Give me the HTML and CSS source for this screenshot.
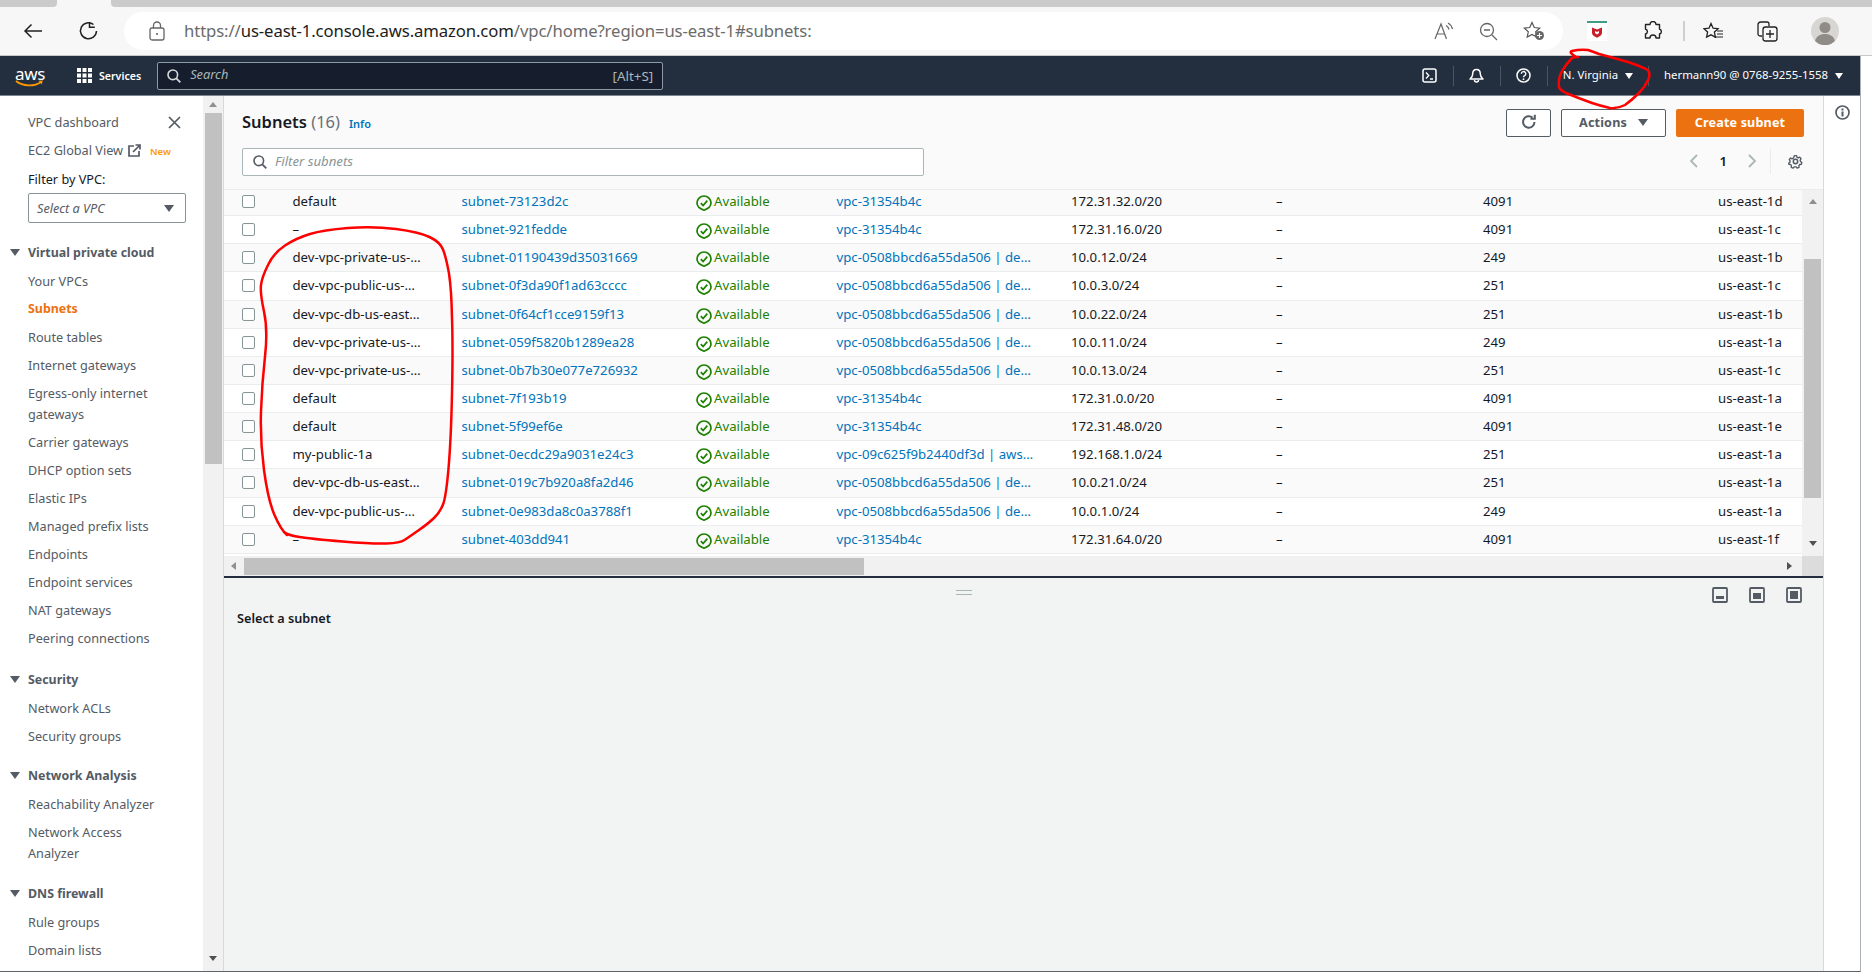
FILE: index.html
```html
<!DOCTYPE html>
<html lang="en">
<head>
<meta charset="utf-8">
<title>Subnets | VPC Console</title>
<link rel="stylesheet" href="styles.css">
</head>
<body>
<svg class="defs" width="0" height="0" aria-hidden="true">
  <symbol id="ok" viewBox="0 0 16 16"><path d="M8 1a7 7 0 0 1 7 7c0 3.4-2.6 5.6-7 7.2C3.600 13.600 1 11.400 1 8a7 7 0 0 1 7-7z" fill="none" stroke="#1d8102" stroke-width="1.700"/><path d="M4.800 8.200l2.300 2.400 4.200-5" fill="none" stroke="#1d8102" stroke-width="1.700"/></symbol>
</svg>

<div class="tabstrip"><span class="tab-left"></span><span class="tab-active"></span><span class="tab-right"></span></div>

<header class="toolbar">
  <svg class="tb-back" width="20" height="16" viewBox="0 0 20 16"><path d="M19 8H2M8.500 1.500L2 8l6.500 6.500" fill="none" stroke="#222" stroke-width="1.500"/></svg>
  <svg class="tb-reload" width="21" height="21" viewBox="0 0 21 21"><path d="M15.500 3.500A8 8 0 1 0 18.500 10" fill="none" stroke="#222" stroke-width="1.500"/><path d="M11.500 1v5.300h5.300" fill="none" stroke="#222" stroke-width="1.500"/></svg>
  <div class="address">
    <svg class="tb-lock" width="16" height="20" viewBox="0 0 16 20"><rect x="1" y="7" width="14" height="12" rx="2" fill="none" stroke="#666" stroke-width="1.300"/><path d="M4.500 7V4.500a3.500 3.500 0 0 1 7 0V7" fill="none" stroke="#666" stroke-width="1.300"/><circle cx="8" cy="13" r="1.100" fill="#666"/></svg>
    <span class="url"><span class="url-dim">https://</span>us-east-1.console.aws.amazon.com<span class="url-dim">/vpc/home?region=us-east-1#subnets:</span></span>
    <span class="spacer"></span>
    <svg class="tb-aloud" width="20" height="18" viewBox="0 0 20 18"><path d="M1 17L7 2l5.500 15M3 12h8" fill="none" stroke="#666" stroke-width="1.200"/><path d="M12 3.500a6 6 0 0 1 3 4M14 1a9 9 0 0 1 4.500 6" fill="none" stroke="#666" stroke-width="1.200"/></svg>
    <svg class="tb-zoom" width="19" height="19" viewBox="0 0 19 19"><circle cx="8" cy="8" r="6.500" fill="none" stroke="#666" stroke-width="1.300"/><path d="M5 8h6M13 13l5 5" fill="none" stroke="#666" stroke-width="1.300"/></svg>
    <svg class="tb-star" width="22" height="20" viewBox="0 0 22 20"><path d="M9 1.500l2.300 5 5.400.6-4 3.700 1.100 5.300L9 13.500l-4.800 2.600 1.100-5.300-4-3.700 5.400-.6z" fill="none" stroke="#555" stroke-width="1.200"/><circle cx="16.500" cy="14.500" r="4.500" fill="#666"/><path d="M16.500 12v5M14 14.500h5" stroke="#fff" stroke-width="1.100"/></svg>
  </div>
  <svg class="tb-mcafee" width="20" height="20" viewBox="0 0 20 20"><rect width="20" height="20" fill="#fff"/><rect width="20" height="2" fill="#3f9c85"/><path d="M5 6.500l5 2 5-2V12c0 2-2.500 3.500-5 4.800C7.500 15.500 5 14 5 12z" fill="#c8202a"/><path d="M8 10l2 1 2-1v2l-2 1.500L8 12z" fill="#fff"/></svg>
  <svg class="tb-ext" width="20" height="20" viewBox="0 0 20 20"><path d="M7 3.500a3 3 0 0 1 6 0h3.500V8a2.600 2.600 0 0 1 0 5v4H13a3 3 0 0 0-6 0H2.500v-4a2.600 2.600 0 0 0 0-5V3.500z" fill="none" stroke="#222" stroke-width="1.400" stroke-linejoin="round"/></svg>
  <span class="tb-sep"></span>
  <svg class="tb-favs" width="21" height="19" viewBox="0 0 21 19"><path d="M8 1.500l2.100 4.700 5 .5-3.700 3.400 1 5L8 12.800l-4.400 2.300 1-5L1 6.700l5-.5z" fill="none" stroke="#222" stroke-width="1.300"/><path d="M14 9h6M14 12h6M11 15h9" stroke="#222" stroke-width="1.200"/></svg>
  <svg class="tb-coll" width="21" height="21" viewBox="0 0 21 21"><path d="M5 15H3a2 2 0 0 1-2-2V4a3 3 0 0 1 3-3h6a2 2 0 0 1 2 2v2" fill="none" stroke="#222" stroke-width="1.300"/><rect x="6" y="6" width="14" height="14" rx="2.500" fill="none" stroke="#222" stroke-width="1.300"/><path d="M13 9v8M9 13h8" stroke="#222" stroke-width="1.300"/></svg>
  <svg class="tb-avatar" width="28" height="28" viewBox="0 0 28 28"><circle cx="14" cy="14" r="14" fill="#d8d6d3"/><circle cx="14" cy="10.500" r="5.500" fill="#8f8c88"/><path d="M4 24c1.500-5 5-7 10-7s8.500 2 10 7a14 14 0 0 1-20 0z" fill="#8f8c88"/></svg>
</header>

<div class="window">
  <nav class="awsnav">
    <span class="logo"><span class="logo-text">aws</span><svg class="logo-smile" width="29" height="8" viewBox="0 0 29 8"><path d="M1 1c7 5.500 18 6 25 1" fill="none" stroke="#f90" stroke-width="1.800"/><path d="M23.500 .8l4.300-.4-1.200 4z" fill="#f90"/></svg></span>
    <svg class="nav-grid" width="15" height="15" viewBox="0 0 15 15" fill="#fff"><rect width="4" height="4"/><rect x="5.500" width="4" height="4"/><rect x="11" width="4" height="4"/><rect y="5.500" width="4" height="4"/><rect x="5.500" y="5.500" width="4" height="4"/><rect x="11" y="5.500" width="4" height="4"/><rect y="11" width="4" height="4"/><rect x="5.500" y="11" width="4" height="4"/><rect x="11" y="11" width="4" height="4"/></svg>
    <span class="services">Services</span>
    <div class="navsearch">
      <svg width="14" height="14" viewBox="0 0 14 14"><circle cx="5.800" cy="5.800" r="4.800" fill="none" stroke="#d5dbdb" stroke-width="1.600"/><path d="M9.300 9.300l4 4" stroke="#d5dbdb" stroke-width="1.800"/></svg>
      <span class="navsearch-ph">Search</span>
      <span class="spacer"></span>
      <span class="navsearch-key">[Alt+S]</span>
    </div>
    <span class="spacer"></span>
    <span class="nav-cell nav-term"><svg width="15" height="15" viewBox="0 0 15 15"><rect x="1" y="1" width="13" height="13" rx="2" fill="none" stroke="#fff" stroke-width="1.500"/><path d="M4 4.500L6.800 7.500 4 10.500M8 11h3" fill="none" stroke="#fff" stroke-width="1.300"/></svg></span>
    <span class="nav-cell nav-bell"><svg width="15" height="15" viewBox="0 0 15 15"><path d="M7.500 1.500c-2.500 0-3.800 2-3.800 4.500 0 2.500-1 3.800-2.700 5h13c-1.700-1.200-2.700-2.500-2.700-5 0-2.500-1.300-4.500-3.800-4.500z" fill="none" stroke="#fff" stroke-width="1.500" stroke-linejoin="round"/><path d="M5.500 12a2 2 0 0 0 4 0" fill="none" stroke="#fff" stroke-width="1.500"/></svg></span>
    <span class="nav-cell nav-help"><svg width="15" height="15" viewBox="0 0 15 15"><circle cx="7.500" cy="7.500" r="6.500" fill="none" stroke="#fff" stroke-width="1.500"/><path d="M5.300 5.800a2.200 2.200 0 1 1 3.300 1.900c-.8.400-1.100.8-1.100 1.600" fill="none" stroke="#fff" stroke-width="1.400"/><circle cx="7.500" cy="11.200" r=".9" fill="#fff"/></svg></span>
    <span class="nav-cell nav-region"><span class="nav-text">N. Virginia</span><span class="caret-w"></span></span>
    <span class="nav-cell nav-user"><span class="nav-text">hermann90 @ 0768-9255-1558</span><span class="caret-w"></span></span>
  </nav>

  <div class="main">
    <aside class="side">
      <div class="side-inner">
        <div class="side-item side-top">VPC dashboard<svg class="side-close" width="13" height="13" viewBox="0 0 13 13"><path d="M1 1l11 11M12 1L1 12" stroke="#545b64" stroke-width="1.700"/></svg></div>
        <div class="side-item">EC2 Global View<svg class="side-ext" width="13" height="13" viewBox="0 0 13 13"><path d="M6 2H1v10h10V7" fill="none" stroke="#545b64" stroke-width="1.700"/><path d="M5 8l6.500-6.500M7.500 1H12v4.500" fill="none" stroke="#545b64" stroke-width="1.700"/></svg><span class="side-new">New</span></div>
        <div class="side-item side-filter">Filter by VPC:</div>
        <div class="side-select"><span>Select a VPC</span><span class="caret-g"></span></div>

        <div class="side-head side-head-first"><span class="caret-g"></span>Virtual private cloud</div>
        <div class="side-item">Your VPCs</div>
        <div class="side-item side-active">Subnets</div>
        <div class="side-item">Route tables</div>
        <div class="side-item">Internet gateways</div>
        <div class="side-item side-wrap">Egress-only internet gateways</div>
        <div class="side-item">Carrier gateways</div>
        <div class="side-item">DHCP option sets</div>
        <div class="side-item">Elastic IPs</div>
        <div class="side-item">Managed prefix lists</div>
        <div class="side-item">Endpoints</div>
        <div class="side-item">Endpoint services</div>
        <div class="side-item">NAT gateways</div>
        <div class="side-item">Peering connections</div>

        <div class="side-head"><span class="caret-g"></span>Security</div>
        <div class="side-item">Network ACLs</div>
        <div class="side-item">Security groups</div>

        <div class="side-head side-head-tight"><span class="caret-g"></span>Network Analysis</div>
        <div class="side-item">Reachability Analyzer</div>
        <div class="side-item side-wrap">Network Access Analyzer</div>

        <div class="side-head side-head-dns"><span class="caret-g"></span>DNS firewall</div>
        <div class="side-item">Rule groups</div>
        <div class="side-item">Domain lists</div>
      </div>
      <div class="side-scroll">
        <span class="arrow arrow-up"></span>
        <span class="side-thumb"></span>
        <span class="spacer"></span>
        <span class="arrow arrow-down"></span>
      </div>
    </aside>

    <section class="content">
      <div class="head">
        <div class="head-top">
          <h1 class="title">Subnets <span class="title-count">(16)</span></h1>
          <a class="info-link">Info</a>
          <span class="spacer"></span>
          <button class="btn btn-icon"><svg width="16" height="16" viewBox="0 0 16 16"><path d="M13.500 8a5.700 5.700 0 1 1-2-4.400" fill="none" stroke="#545b64" stroke-width="2"/><path d="M9.500 4.800h4.300V.8" fill="none" stroke="#545b64" stroke-width="2"/></svg></button>
          <button class="btn btn-actions">Actions<span class="caret-g"></span></button>
          <button class="btn btn-primary">Create subnet</button>
        </div>
        <div class="head-tools">
          <div class="filter">
            <svg width="14" height="14" viewBox="0 0 14 14"><circle cx="5.800" cy="5.800" r="4.800" fill="none" stroke="#545b64" stroke-width="1.600"/><path d="M9.300 9.300l4 4" stroke="#545b64" stroke-width="1.800"/></svg>
            <span class="filter-ph">Filter subnets</span>
          </div>
          <span class="spacer"></span>
          <div class="pager">
            <svg class="pg-prev" width="9" height="14" viewBox="0 0 9 14"><path d="M8 1L2 7l6 6" fill="none" stroke="#aab7b8" stroke-width="1.800"/></svg>
            <span class="pg-num">1</span>
            <svg class="pg-next" width="9" height="14" viewBox="0 0 9 14"><path d="M1 1l6 6-6 6" fill="none" stroke="#aab7b8" stroke-width="1.800"/></svg>
            <span class="pg-sep"></span>
            <svg class="pg-gear" width="15" height="15" viewBox="0 0 15 15"><circle cx="7.500" cy="7.500" r="2.200" fill="none" stroke="#545b64" stroke-width="1.500"/><path d="M6.300 1h2.400l.4 1.800 1.500.7 1.600-.9 1.500 1.800-1 1.500.3 1.600 1.500.9-.5 2.300-1.800.1-1 1.300.3 1.800-2.200.9-1.100-1.400H6l-1.100 1.400-2.200-.9.300-1.800-1-1.300-1.800-.1L-.3 9.400l1.500-.9.300-1.600-1-1.500L2 3.600l1.600.9 1.500-.7z" transform="translate(.75 .75) scale(.9)" fill="none" stroke="#545b64" stroke-width="1.500" stroke-linejoin="round"/></svg>
          </div>
        </div>
      </div>

      <div class="table-area">
        <div class="rows">
          <div class="row"><span class="cb"></span><span>default</span><a>subnet-73123d2c</a><span class="st"><svg><use href="#ok"/></svg>Available</span><a>vpc-31354b4c</a><span>172.31.32.0/20</span><span>–</span><span>4091</span><span>us-east-1d</span></div>
          <div class="row"><span class="cb"></span><span>–</span><a>subnet-921fedde</a><span class="st"><svg><use href="#ok"/></svg>Available</span><a>vpc-31354b4c</a><span>172.31.16.0/20</span><span>–</span><span>4091</span><span>us-east-1c</span></div>
          <div class="row"><span class="cb"></span><span>dev-vpc-private-us-…</span><a>subnet-01190439d35031669</a><span class="st"><svg><use href="#ok"/></svg>Available</span><a>vpc-0508bbcd6a55da506 | de…</a><span>10.0.12.0/24</span><span>–</span><span>249</span><span>us-east-1b</span></div>
          <div class="row"><span class="cb"></span><span>dev-vpc-public-us-…</span><a>subnet-0f3da90f1ad63cccc</a><span class="st"><svg><use href="#ok"/></svg>Available</span><a>vpc-0508bbcd6a55da506 | de…</a><span>10.0.3.0/24</span><span>–</span><span>251</span><span>us-east-1c</span></div>
          <div class="row"><span class="cb"></span><span>dev-vpc-db-us-east…</span><a>subnet-0f64cf1cce9159f13</a><span class="st"><svg><use href="#ok"/></svg>Available</span><a>vpc-0508bbcd6a55da506 | de…</a><span>10.0.22.0/24</span><span>–</span><span>251</span><span>us-east-1b</span></div>
          <div class="row"><span class="cb"></span><span>dev-vpc-private-us-…</span><a>subnet-059f5820b1289ea28</a><span class="st"><svg><use href="#ok"/></svg>Available</span><a>vpc-0508bbcd6a55da506 | de…</a><span>10.0.11.0/24</span><span>–</span><span>249</span><span>us-east-1a</span></div>
          <div class="row"><span class="cb"></span><span>dev-vpc-private-us-…</span><a>subnet-0b7b30e077e726932</a><span class="st"><svg><use href="#ok"/></svg>Available</span><a>vpc-0508bbcd6a55da506 | de…</a><span>10.0.13.0/24</span><span>–</span><span>251</span><span>us-east-1c</span></div>
          <div class="row"><span class="cb"></span><span>default</span><a>subnet-7f193b19</a><span class="st"><svg><use href="#ok"/></svg>Available</span><a>vpc-31354b4c</a><span>172.31.0.0/20</span><span>–</span><span>4091</span><span>us-east-1a</span></div>
          <div class="row"><span class="cb"></span><span>default</span><a>subnet-5f99ef6e</a><span class="st"><svg><use href="#ok"/></svg>Available</span><a>vpc-31354b4c</a><span>172.31.48.0/20</span><span>–</span><span>4091</span><span>us-east-1e</span></div>
          <div class="row"><span class="cb"></span><span>my-public-1a</span><a>subnet-0ecdc29a9031e24c3</a><span class="st"><svg><use href="#ok"/></svg>Available</span><a>vpc-09c625f9b2440df3d | aws…</a><span>192.168.1.0/24</span><span>–</span><span>251</span><span>us-east-1a</span></div>
          <div class="row"><span class="cb"></span><span>dev-vpc-db-us-east…</span><a>subnet-019c7b920a8fa2d46</a><span class="st"><svg><use href="#ok"/></svg>Available</span><a>vpc-0508bbcd6a55da506 | de…</a><span>10.0.21.0/24</span><span>–</span><span>251</span><span>us-east-1a</span></div>
          <div class="row"><span class="cb"></span><span>dev-vpc-public-us-…</span><a>subnet-0e983da8c0a3788f1</a><span class="st"><svg><use href="#ok"/></svg>Available</span><a>vpc-0508bbcd6a55da506 | de…</a><span>10.0.1.0/24</span><span>–</span><span>249</span><span>us-east-1a</span></div>
          <div class="row"><span class="cb"></span><span>–</span><a>subnet-403dd941</a><span class="st"><svg><use href="#ok"/></svg>Available</span><a>vpc-31354b4c</a><span>172.31.64.0/20</span><span>–</span><span>4091</span><span>us-east-1f</span></div>
        </div>
        <div class="v-scroll">
          <span class="arrow arrow-up"></span>
          <span class="v-thumb"></span>
          <span class="spacer"></span>
          <span class="arrow arrow-down"></span>
        </div>
      </div>
      <div class="h-scroll">
        <span class="arrow arrow-left"></span>
        <span class="h-thumb"></span>
        <span class="spacer"></span>
        <span class="arrow arrow-right"></span>
        <span class="h-corner"></span>
      </div>

      <div class="detail">
        <div class="detail-bar">
          <span class="drag"></span>
          <svg class="pane-ic" width="16" height="16" viewBox="0 0 16 16"><rect x="1" y="1" width="14" height="14" rx="1" fill="none" stroke="#545b64" stroke-width="1.800"/><rect x="4" y="9" width="8" height="3" fill="#545b64"/></svg>
          <svg class="pane-ic" width="16" height="16" viewBox="0 0 16 16"><rect x="1" y="1" width="14" height="14" rx="1" fill="none" stroke="#545b64" stroke-width="1.800"/><rect x="4" y="6" width="8" height="6" fill="#545b64"/></svg>
          <svg class="pane-ic" width="16" height="16" viewBox="0 0 16 16"><rect x="1" y="1" width="14" height="14" rx="1" fill="none" stroke="#545b64" stroke-width="1.800"/><rect x="4" y="4" width="8" height="8" fill="#545b64"/></svg>
        </div>
        <div class="detail-title">Select a subnet</div>
      </div>
    </section>

    <aside class="rail">
      <svg width="15" height="15" viewBox="0 0 15 15"><circle cx="7.500" cy="7.500" r="6.500" fill="none" stroke="#545b64" stroke-width="1.700"/><rect x="6.500" y="6.500" width="2" height="5" fill="#545b64"/><rect x="6.500" y="3.500" width="2" height="2" fill="#545b64"/></svg>
    </aside>
  </div>
</div>

<svg class="ink" width="1872" height="972" viewBox="0 0 1872 972" aria-hidden="true">
  <path d="M284 532Q287 535 299.500 537Q312 539 342.500 541.500Q373 544 386.500 543.500Q400 543 404.500 540Q409 537 419 530Q429 523 434.500 517.500Q440 512 443 504.500Q446 497 448.500 468.500Q451 440 452 393.500Q453 347 452 318.500Q451.500 290 449 273.500Q446 257 443 249.500Q440 242 429.500 237Q419 232 396 229Q373 226 348 228Q323 230 310 234Q296.500 238 285 245.500Q273.600 253 268 265Q262 277 261 285Q260 293 264 311.500Q268 330 265 356.500Q262 383 261 411.500Q260 440 264 470Q268 500 274.500 515Q281 530 287 535"/>
  <path d="M1576 57Q1568 52 1572 51Q1580 49 1588 50Q1594 52 1599 54Q1614 58 1628 62Q1640 66 1648 70Q1651 75 1648 80Q1645 87 1639 93Q1632 100 1625 105Q1617 109 1610 108Q1601 106 1592 103Q1578 98 1566 93Q1560 90 1559 87Q1558 80 1561 73Q1565 65 1572 58Q1574 57 1578 57"/>
</svg>
</body>
</html>
```

FILE: styles.css
```css
* { box-sizing: border-box; }
html, body { margin: 0; padding: 0; }
body {
  width: 1872px;
  height: 972px;
  overflow: hidden;
  position: relative;
  background: #fff;
  font-family: "Noto Sans", "Open Sans", sans-serif;
  font-size: 13.200px;
  color: #16191f;
}
.defs { position: absolute; }
.spacer { flex: 1 1 auto; }

/* browser chrome */
.tabstrip { display: flex; height: 7px; background: #f7f7f7; }
.tab-left { width: 57px; background: #cbcbcb; border-bottom-right-radius: 4px; }
.tab-active { width: 54px; }
.tab-right { flex: 1; background: #cbcbcb; border-bottom-left-radius: 4px; }

.toolbar {
  display: flex;
  align-items: center;
  height: 49px;
  background: #f7f7f7;
  border-bottom: 1px solid #c9c9c9;
}
.tb-back { margin-left: 23px; }
.tb-reload { margin-left: 35px; }
.address {
  display: flex;
  align-items: center;
  width: 1439px;
  height: 38px;
  margin-left: 25px;
  padding-left: 25px;
  background: #fff;
  border-radius: 19px;
}
.url { margin-left: 19px; padding-bottom: 1px; font-size: 16.700px; color: #1d1d1d; white-space: nowrap; letter-spacing: -.1px; }
.url-dim { color: #6b6b6b; }
.tb-aloud { margin-right: 25px; }
.tb-zoom { margin-right: 25px; }
.tb-star { margin-right: 18px; }
.tb-mcafee { margin-left: 24px; }
.tb-ext { margin-left: 36px; }
.tb-sep { width: 2px; height: 20px; margin-left: 20px; background: #cfcfcf; }
.tb-favs { margin-left: 18px; }
.tb-coll { margin-left: 33px; }
.tb-avatar { margin-left: 33px; }

/* window */
.window { width: 1861px; height: 916px; display: flex; flex-direction: column; border-right: 1px solid #aab0b5; border-bottom: 1px solid #5f6468; }

.awsnav {
  display: flex;
  align-items: center;
  flex: none;
  height: 40px;
  padding-right: 17px;
  background: #232f3e;
  border-bottom: 1px solid #7d8690;
  color: #fff;
}
.logo { display: block; width: 30px; height: 20px; margin-left: 15px; }
.logo-text { display: block; font-size: 17px; line-height: 15px; text-align: center; letter-spacing: -.4px; }
.logo-smile { display: block; margin-top: -1px; }
.nav-grid { margin-left: 32px; }
.services { margin-left: 7px; font-size: 10.600px; font-weight: 600; }
.navsearch {
  display: flex;
  align-items: center;
  width: 506px;
  height: 28px;
  margin-left: 16px;
  padding: 0 9px;
  background: #161e2d;
  border: 1px solid #8d99a5;
  border-radius: 2px;
}
.navsearch-ph { margin-left: 9px; padding-bottom: 3px; font-style: italic; font-size: 12.800px; color: #aab7b8; }
.navsearch-key { font-size: 13.400px; color: #aab7b8; }
.nav-cell { display: flex; align-items: center; justify-content: center; height: 20px; }
.nav-term, .nav-bell, .nav-help { width: 47px; border-right: 1px solid #4a5563; }
.nav-region { width: 101px; border-right: 1px solid #4a5563; }
.nav-user { padding-left: 15px; }
.nav-text { padding-bottom: 2px; font-size: 11.400px; white-space: nowrap; }
.caret-w { width: 0; height: 0; margin-left: 7px; border: 4px solid transparent; border-top: 6px solid #fff; border-bottom: 0; }

/* main */
.main { flex: 1 1 auto; display: flex; min-height: 0; }
.side { flex: none; display: flex; width: 224px; border-right: 1px solid #d5dbdb; }
.side-inner { flex: none; width: 203px; height: 100%; overflow: hidden; padding-top: 12px; font-size: 12.700px; color: #545b64; }
.side-item { position: relative; padding-left: 28px; height: 28px; line-height: 28px; white-space: nowrap; }
.side-wrap { height: 49px; width: 170px; padding-top: 3.500px; line-height: 21px; white-space: normal; }
.side-close { position: absolute; left: 168px; top: 8px; }
.side-ext { margin-left: 5px; vertical-align: -2px; }
.side-new { margin-left: 9px; font-size: 9.500px; font-weight: 600; color: #f90; }
.side-filter { margin-top: 1px; color: #16191f; }
.side-select {
  display: flex;
  align-items: center;
  justify-content: space-between;
  width: 158px;
  height: 30px;
  margin: 0 0 15px 28px;
  padding: 0 11px 0 8px;
  border: 1px solid #879596;
  border-radius: 2px;
  font-style: italic;
}
.caret-g { width: 0; height: 0; border: 5px solid transparent; border-top: 7px solid #545b64; border-bottom: 0; }
.side-head {
  display: flex;
  align-items: center;
  height: 28px;
  margin: 13px 0 1px;
  padding-left: 10px;
  font-size: 12.400px;
  font-weight: 700;
}
.side-head-first { margin-top: 0; }
.side-head-tight { margin-top: 11px; }
.side-head-dns { margin-top: 12px; }
.side-head .caret-g { margin-right: 8px; }
.side-active { color: #ec7211; font-size: 12.400px; font-weight: 700; }

.side-scroll, .v-scroll {
  display: flex;
  flex-direction: column;
  align-items: center;
  background: #f1f1f1;
}
.side-scroll { width: 20px; padding: 6px 0 10px; }
.side-thumb { flex: none; width: 17px; height: 351px; margin-top: 6px; background: #c1c1c1; }
.arrow { flex: none; width: 0; height: 0; border: 4px solid transparent; }
.arrow-up { border-bottom: 5px solid #8f8f8f; border-top: 0; }
.arrow-down { border-top: 5px solid #505050; border-bottom: 0; }
.arrow-left { border-right: 5px solid #8f8f8f; border-left: 0; }
.arrow-right { border-left: 5px solid #505050; border-right: 0; }

/* content */
.content { flex: 1 1 auto; min-width: 0; display: flex; flex-direction: column; }
.head { flex: none; height: 94px; padding: 13px 19px 0 18px; background: #fafafa; border-bottom: 1px solid #eaeded; }
.head-top { display: flex; align-items: center; height: 28px; }
.title { margin: 0 0 3px; font-size: 16.500px; font-weight: 600; }
.title-count { font-weight: 400; color: #687078; }
.info-link { margin-left: 9px; font-size: 11px; font-weight: 600; color: #0073bb; }
.btn { height: 28px; border-radius: 2px; font-family: inherit; font-weight: 700; font-size: 12.600px; letter-spacing: .15px; padding: 0 0 2px; display: flex; align-items: center; justify-content: center; }
.btn-icon, .btn-actions { background: #fff; border: 1px solid #545b64; color: #545b64; }
.btn-icon { width: 45px; }
.btn-actions { width: 105px; margin-left: 10px; gap: 11px; }
.btn-primary { width: 128px; margin-left: 10px; background: #ec7211; border: 0; color: #fff; }
.head-tools { display: flex; align-items: center; height: 28px; margin-top: 11px; padding-right: 1px; }
.filter {
  display: flex;
  align-items: center;
  gap: 8px;
  width: 682px;
  height: 28px;
  padding-left: 10px;
  background: #fff;
  border: 1px solid #aab7b8;
  border-radius: 2px;
  font-style: italic;
  color: #879596;
}
.filter-ph { padding-bottom: 2px; }
.pager { display: flex; align-items: center; height: 28px; padding-bottom: 2px; }
.pg-num { margin-left: 21px; font-size: 13.200px; font-weight: 600; }
.pg-next { margin-left: 21px; }
.pg-sep { width: 1px; height: 26px; margin-left: 13px; background: #eaeded; }
.pg-gear { margin-left: 17px; }

.table-area { flex: none; display: flex; height: 366px; }
.rows { flex: none; width: 1578px; overflow: hidden; }
.row {
  display: grid;
  grid-template-columns: 68.500px 169px 234.500px 140.500px 234.500px 205px 207px 235px 84px;
  align-items: center;
  height: 28.150px;
  border-bottom: 1px solid #eaeded;
  white-space: nowrap;
  background: #fff;
}
.row:first-child { margin-top: -2px; }
.row:nth-child(odd) { background: #fafafa; }
.row > a, .row > span { padding-bottom: 1px; }
.row a { color: #0073bb; }
.row > .cb { display: block; width: 13px; height: 13px; margin-left: 18px; padding: 0; background: #fff; border: 1px solid #879596; border-radius: 2px; }
.st { display: flex; align-items: center; color: #1d8102; }
.st svg { width: 16px; height: 16px; margin-right: 2px; flex: none; position: relative; top: 2px; }
.v-scroll { width: 21px; padding: 9px 0 10px; }
.v-thumb { flex: none; width: 17px; height: 239px; margin-top: 55px; background: #c1c1c1; }

.h-scroll { flex: none; display: flex; align-items: center; height: 20px; padding-left: 7px; background: #f1f1f1; }
.h-thumb { flex: none; width: 620px; height: 17px; margin-left: 8px; background: #c1c1c1; }
.h-scroll .arrow-right { margin-right: 10px; }
.h-corner { flex: none; width: 21px; height: 100%; background: #dcdcdc; }

.detail { flex: 1 1 auto; background: #f2f3f3; border-top: 2px solid #232f3e; }
.detail-bar { position: relative; display: flex; justify-content: flex-end; gap: 21px; padding: 9px 21px 0 0; height: 27px; }
.drag { position: absolute; left: 732px; top: 12px; width: 16px; height: 5px; border-top: 1px solid #aab7b8; border-bottom: 1px solid #aab7b8; }
.detail-title { margin: 4px 0 0 13px; font-weight: 600; font-size: 12.700px; }

.rail { flex: none; width: 37px; display: flex; justify-content: center; padding-top: 9px; border-left: 1px solid #d5dbdb; }

/* hand-drawn annotations over the page */
.ink { position: absolute; left: 0; top: 0; pointer-events: none; }
.ink path { fill: none; stroke: #f00; stroke-width: 2.500; stroke-linecap: round; stroke-linejoin: round; }
```
